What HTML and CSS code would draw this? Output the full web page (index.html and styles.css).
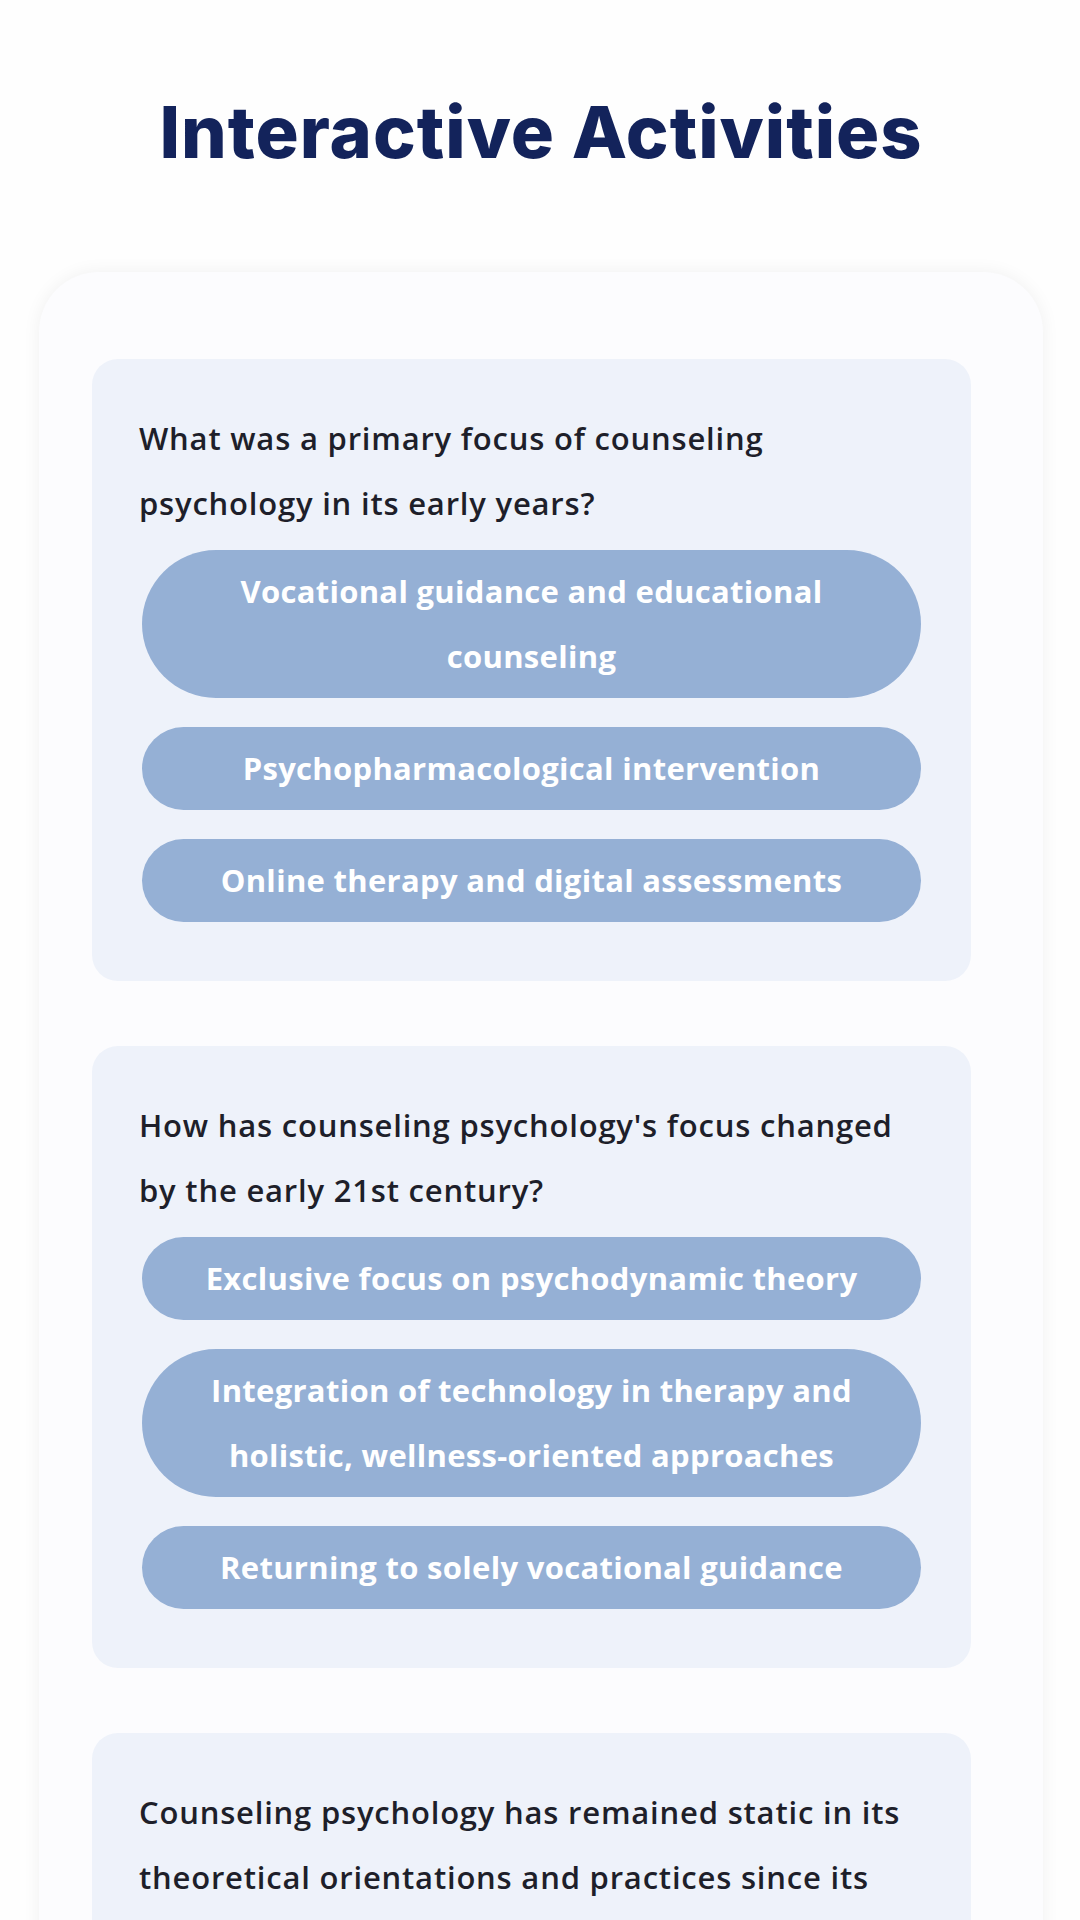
FILE: index.html
```html
<!doctype html>
<html>
    <head>
        <meta charset="utf-8">
        <title>Interactive Activities</title>
        <link rel="stylesheet" href="styles.css">
    </head>
    <body>
        <h1 class="page-title">Interactive Activities</h1>

        <div class="activity-panel">

            <div class="quiz-card">
                <p class="quiz-question">What was a primary focus of counseling psychology in its early years?</p>
                <button type="button" class="quiz-option">Vocational guidance and educational counseling</button>
                <button type="button" class="quiz-option">Psychopharmacological intervention</button>
                <button type="button" class="quiz-option">Online therapy and digital assessments</button>
            </div>

            <div class="quiz-card">
                <p class="quiz-question">How has counseling psychology's focus changed by the early 21st century?</p>
                <button type="button" class="quiz-option">Exclusive focus on psychodynamic theory</button>
                <button type="button" class="quiz-option">Integration of technology in therapy and holistic, wellness-oriented approaches</button>
                <button type="button" class="quiz-option">Returning to solely vocational guidance</button>
            </div>

            <div class="quiz-card">
                <p class="quiz-question">Counseling psychology has remained static in its theoretical orientations and practices since its inception.</p>
                <button type="button" class="quiz-option">True</button>
                <button type="button" class="quiz-option">False</button>
            </div>

        </div>
    </body>
</html>
```

FILE: styles.css
```css
html,
body {
    margin: 0;
    background: #fefefe;
}

body {
    padding: 92px 37px 40px 39px;
    font-family: "Open Sans", "Noto Sans", sans-serif;
}

.page-title {
    margin: 0 0 100px;
    text-align: center;
    font-family: Inter, "Noto Sans", sans-serif;
    font-weight: 800;
    font-size: 72px;
    line-height: 80px;
    letter-spacing: 1px;
    color: #13235b;
}

.activity-panel {
    padding: 87px 72px 60px 53px;
    background: #fcfcfe;
    border-radius: 60px;
    box-shadow: 0 0 18px rgba(0, 0, 0, .06);
}

.quiz-card {
    margin-bottom: 65px;
    padding: 47px 47px 30px;
    background: #eef2fa;
    border-radius: 26px;
}

.quiz-question {
    margin: 0 0 14px;
    font-size: 31px;
    line-height: 65px;
    font-weight: 600;
    letter-spacing: .8px;
    color: #1e1f2a;
}

.quiz-option {
    display: block;
    width: calc(100% - 6px);
    margin: 0 3px 29px;
    padding: 9px 60px;
    border: 0;
    border-radius: 999px;
    background: #95b0d5;
    color: #fff;
    font-family: inherit;
    font-size: 31px;
    line-height: 65px;
    font-weight: 700;
    letter-spacing: .3px;
    text-align: center;
}
```
